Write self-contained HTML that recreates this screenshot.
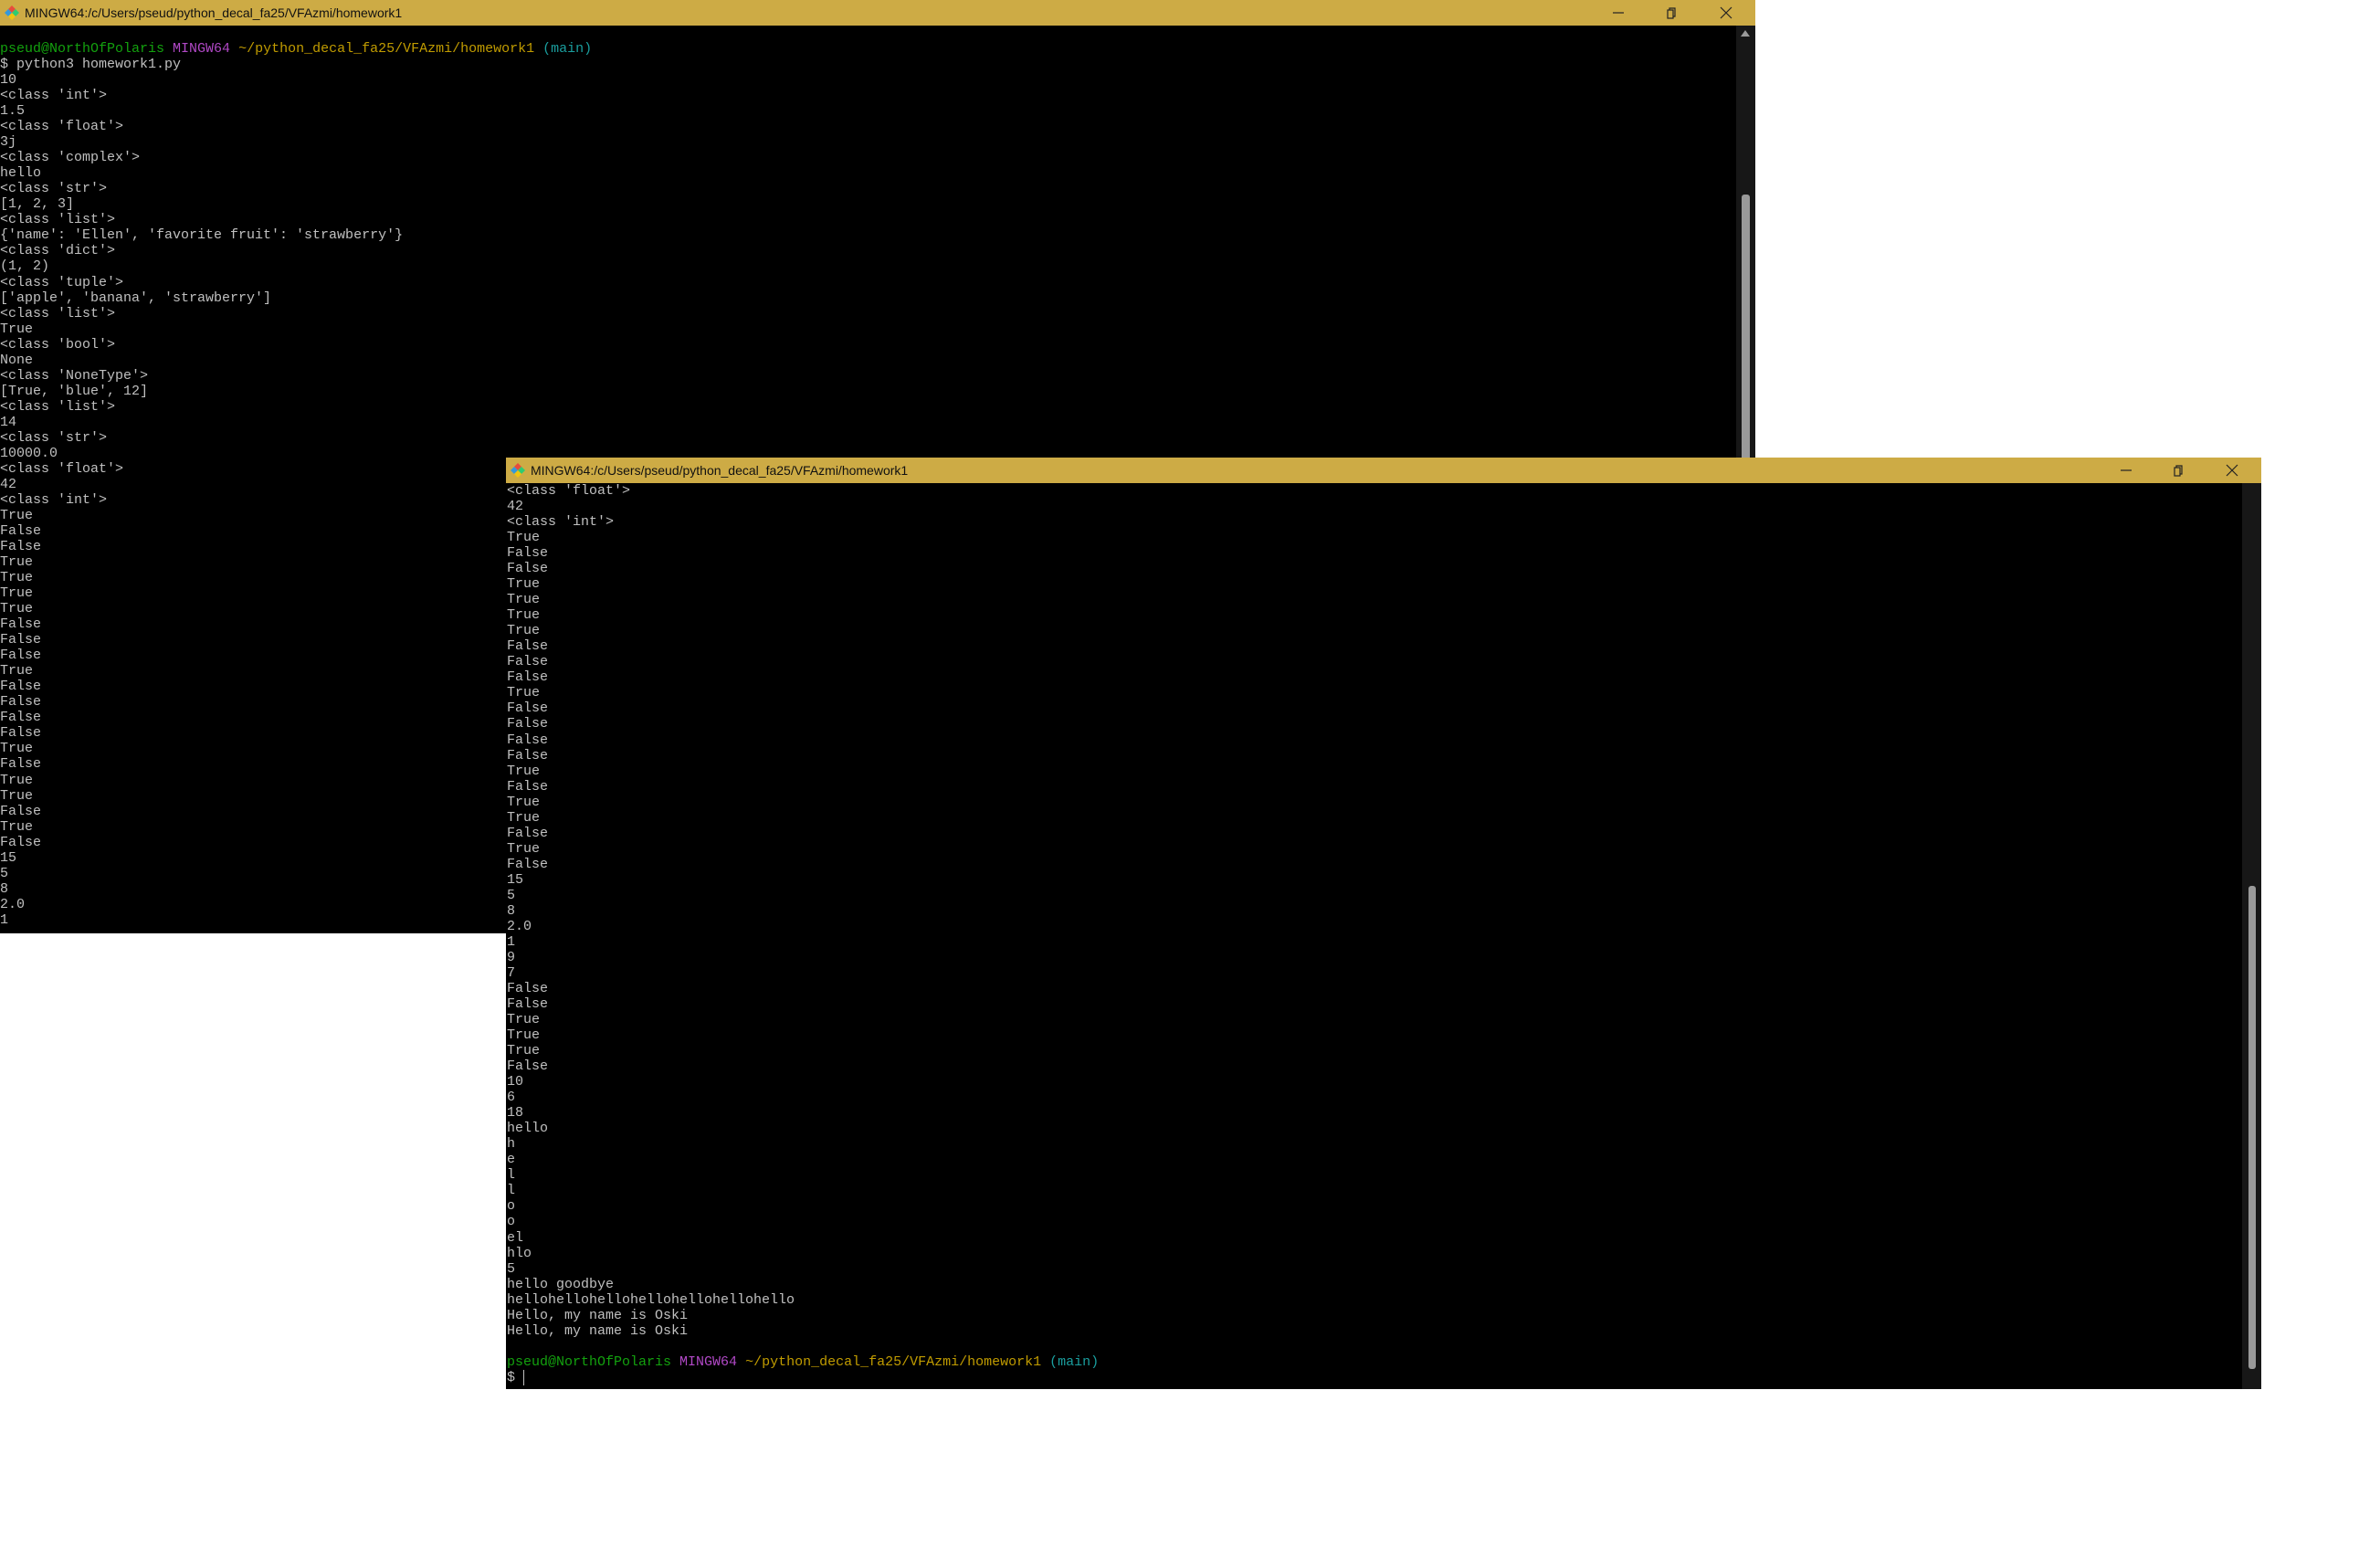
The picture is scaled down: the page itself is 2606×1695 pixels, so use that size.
<!DOCTYPE html>
<html><head><meta charset="utf-8"><style>
body{margin:0;width:2606px;height:1695px;background:#fff;position:relative;overflow:hidden}
.win{position:absolute;background:#000}
.tb{position:absolute;left:0;right:0;top:0;height:28px;background:#cdab45;font:14px "Liberation Sans",sans-serif;color:#111}
.tt{position:absolute;top:6px}
.ico{position:absolute;left:4px;top:5px;width:18px;height:18px}
.ctl{position:absolute;top:5px;width:18px;height:18px}
pre{position:absolute;margin:0;font:15px/17.03px "Liberation Mono",monospace;color:#c0c0c0;white-space:pre}
.g{color:#13a10e}.m{color:#b148c6}.y{color:#c19c00}.c{color:#1a9e9e}
.sb{position:absolute;background:#171717}
.th{position:absolute;background:#9a9a9a;border-radius:3px}
</style></head><body>

<div class="win" style="left:0;top:0;width:1922px;height:1022px">
 <div class="tb">
  <svg class="ico" viewBox="0 0 18 18"><path d="M9 1 L13 5 L9 9 L5 5Z" fill="#e74c3c"/><path d="M13 5 L17 9 L13 13 L9 9Z" fill="#2ecc71"/><path d="M5 5 L9 9 L5 13 L1 9Z" fill="#3498db"/><path d="M9 9 L13 13 L9 17 L5 13Z" fill="#f1c40f"/></svg>
  <span class="tt" style="left:27px">MINGW64:/c/Users/pseud/python_decal_fa25/VFAzmi/homework1</span>
  <svg class="ctl" style="left:1763px" viewBox="0 0 18 18"><path d="M3 9H15" stroke="#222" stroke-width="1.2"/></svg>
  <svg class="ctl" style="left:1821px" viewBox="0 0 18 18"><rect x="5" y="6" width="6" height="9" fill="none" stroke="#222" stroke-width="1.2"/><path d="M7 6V4H13V13H11" fill="none" stroke="#222" stroke-width="1.2"/></svg>
  <svg class="ctl" style="left:1881px" viewBox="0 0 18 18"><path d="M3 3L15 15M15 3L3 15" stroke="#222" stroke-width="1.2"/></svg>
 </div>
 <div class="sb" style="left:1901px;top:28px;width:21px;height:994px"></div>
 <div style="position:absolute;left:1906px;top:33px;width:0;height:0;border-left:5px solid transparent;border-right:5px solid transparent;border-bottom:7px solid #9a9a9a"></div>
 <div class="th" style="left:1907px;top:213px;width:9px;height:809px"></div>
<pre style="left:0;top:28px">

<span class="g">pseud@NorthOfPolaris</span> <span class="m">MINGW64</span> <span class="y">~/python_decal_fa25/VFAzmi/homework1</span> <span class="c">(main)</span>
$ python3 homework1.py
10
&lt;class 'int'&gt;
1.5
&lt;class 'float'&gt;
3j
&lt;class 'complex'&gt;
hello
&lt;class 'str'&gt;
[1, 2, 3]
&lt;class 'list'&gt;
{'name': 'Ellen', 'favorite fruit': 'strawberry'}
&lt;class 'dict'&gt;
(1, 2)
&lt;class 'tuple'&gt;
['apple', 'banana', 'strawberry']
&lt;class 'list'&gt;
True
&lt;class 'bool'&gt;
None
&lt;class 'NoneType'&gt;
[True, 'blue', 12]
&lt;class 'list'&gt;
14
&lt;class 'str'&gt;
10000.0
&lt;class 'float'&gt;
42
&lt;class 'int'&gt;
True
False
False
True
True
True
True
False
False
False
True
False
False
False
False
True
False
True
True
False
True
False
15
5
8
2.0
1</pre>
</div>

<div class="win" style="left:554px;top:501px;width:1922px;height:1020px">
 <div class="tb">
  <svg class="ico" viewBox="0 0 18 18"><path d="M9 1 L13 5 L9 9 L5 5Z" fill="#e74c3c"/><path d="M13 5 L17 9 L13 13 L9 9Z" fill="#2ecc71"/><path d="M5 5 L9 9 L5 13 L1 9Z" fill="#3498db"/><path d="M9 9 L13 13 L9 17 L5 13Z" fill="#f1c40f"/></svg>
  <span class="tt" style="left:27px">MINGW64:/c/Users/pseud/python_decal_fa25/VFAzmi/homework1</span>
  <svg class="ctl" style="left:1765px" viewBox="0 0 18 18"><path d="M3 9H15" stroke="#222" stroke-width="1.2"/></svg>
  <svg class="ctl" style="left:1822px" viewBox="0 0 18 18"><rect x="5" y="6" width="6" height="9" fill="none" stroke="#222" stroke-width="1.2"/><path d="M7 6V4H13V13H11" fill="none" stroke="#222" stroke-width="1.2"/></svg>
  <svg class="ctl" style="left:1881px" viewBox="0 0 18 18"><path d="M3 3L15 15M15 3L3 15" stroke="#222" stroke-width="1.2"/></svg>
 </div>
 <div class="sb" style="left:1901px;top:28px;width:21px;height:992px"></div>
 <div class="th" style="left:1908px;top:469px;width:8px;height:529px"></div>
<pre style="left:1px;top:28px">&lt;class 'float'&gt;
42
&lt;class 'int'&gt;
True
False
False
True
True
True
True
False
False
False
True
False
False
False
False
True
False
True
True
False
True
False
15
5
8
2.0
1
9
7
False
False
True
True
True
False
10
6
18
hello
h
e
l
l
o
o
el
hlo
5
hello goodbye
hellohellohellohellohellohellohello
Hello, my name is Oski
Hello, my name is Oski

<span class="g">pseud@NorthOfPolaris</span> <span class="m">MINGW64</span> <span class="y">~/python_decal_fa25/VFAzmi/homework1</span> <span class="c">(main)</span>
$ <span style="border-left:1px solid #c0c0c0"> </span></pre>
</div>

</body></html>
